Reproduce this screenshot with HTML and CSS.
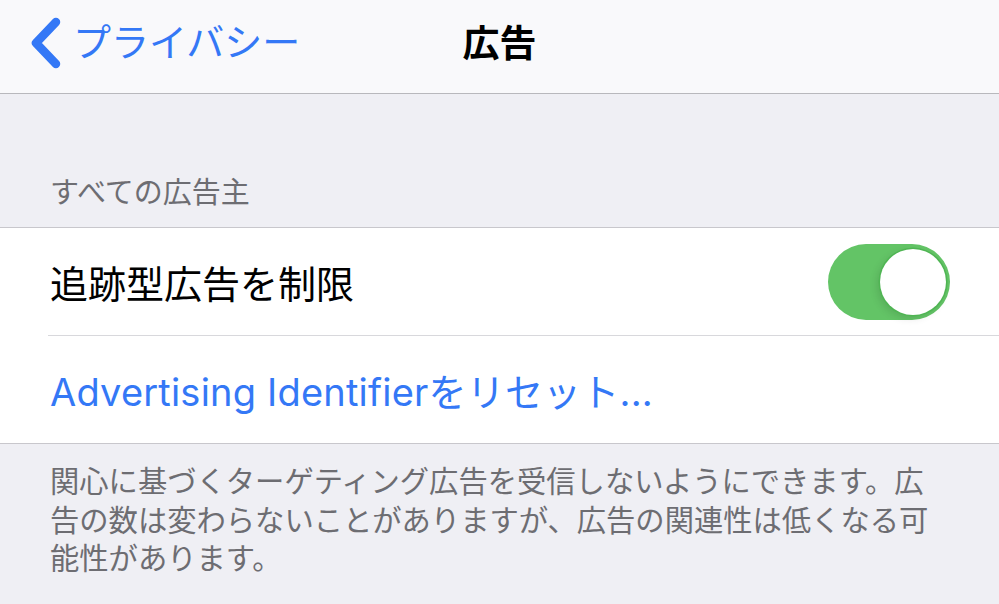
FILE: index.html
```html
<!DOCTYPE html>
<html lang="ja">
<head>
<meta charset="utf-8">
<link rel="stylesheet" href="styles.css">
</head>
<body>
<div class="screen">
  <header class="nav">
    <div class="back">
      <svg class="chev" width="30" height="52" viewBox="0 0 30 52"><polyline points="25,5 5,26 25,47" fill="none" stroke="#3478f6" stroke-width="8.5" stroke-linecap="round" stroke-linejoin="round"/></svg>
      <span class="back-label">プライバシー</span>
    </div>
    <div class="title">広告</div>
    <div class="spacer"></div>
  </header>
  <div class="section-header">すべての広告主</div>
  <div class="group">
    <div class="row">
      <span class="row-label">追跡型広告を制限</span>
      <div class="toggle"><div class="knob"></div></div>
    </div>
    <div class="row">
      <span class="row-link">Advertising Identifierをリセット...</span>
    </div>
  </div>
  <div class="footer">関心に基づくターゲティング広告を受信しないようにできます。広告の数は変わらないことがありますが、広告の関連性は低くなる可能性があります。</div>
</div>
</body>
</html>
```

FILE: styles.css
```css
html, body {
  margin: 0;
  padding: 0;
}
body {
  width: 999px;
  height: 604px;
  overflow: hidden;
  background: #efeff4;
  font-family: "Inter", "Noto Sans CJK JP", sans-serif;
}
.screen {
  display: flex;
  flex-direction: column;
}
.nav {
  height: 93px;
  background: #f9f9fb;
  border-bottom: 1px solid #b8b8bc;
  display: grid;
  grid-template-columns: 1fr auto 1fr;
  align-items: center;
  box-sizing: content-box;
}
.back {
  display: flex;
  align-items: center;
  padding-left: 31px;
  color: #3478f6;
  font-size: 38px;
  gap: 12px;
  margin-top: -10px;
}
.chev {
  display: block;
  margin-top: 2px;
}
.back-label {
  line-height: 1;
}
.title {
  font-size: 37px;
  font-weight: 700;
  color: #000;
  margin-top: -12px;
}
.section-header {
  padding: 79px 50px 14px;
  font-size: 29px;
  line-height: 40px;
  color: #6d6d72;
}
.group {
  background: #fff;
  border-top: 1px solid #c8c7cc;
  border-bottom: 1px solid #c8c7cc;
}
.row {
  height: 107px;
  margin-left: 48px;
  padding-right: 49px;
  display: flex;
  align-items: center;
  justify-content: space-between;
}
.row + .row {
  border-top: 1px solid #d8d8dc;
}
.row-label {
  font-size: 38px;
  color: #000;
  padding-left: 2px;
}
.row-link {
  font-size: 38px;
  color: #3478f6;
  padding-left: 2px;
  letter-spacing: 0.2px;
}
.toggle {
  width: 122px;
  height: 76px;
  border-radius: 38px;
  background: #63c466;
  display: flex;
  justify-content: flex-end;
  align-items: center;
  padding: 0 4px;
  box-sizing: border-box;
}
.knob {
  width: 66px;
  height: 66px;
  border-radius: 50%;
  background: #fff;
  box-shadow: 0 0 0 1.5px #4fb553, -3px 3px 8px rgba(0, 0, 0, 0.12);
}
.footer {
  padding: 19px 50px 0;
  font-size: 29.3px;
  line-height: 38.5px;
  color: #6d6d72;
}
```
